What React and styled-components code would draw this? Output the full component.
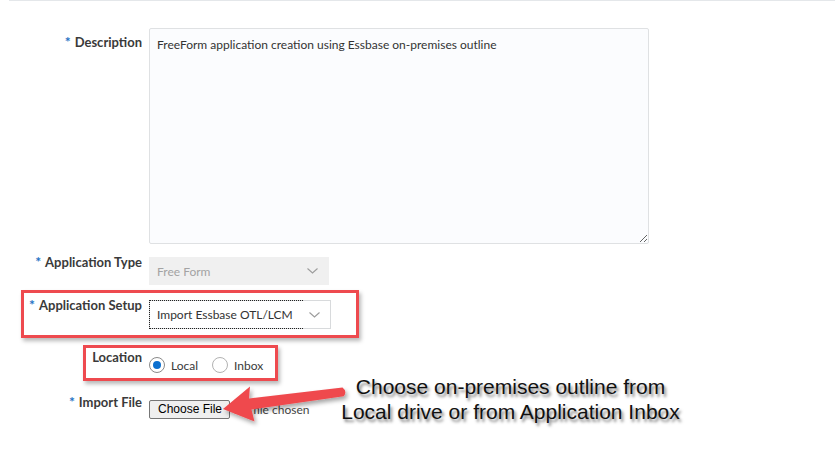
import React from "react";
import styled, { createGlobalStyle } from "styled-components";

const GlobalStyle = createGlobalStyle`
  html, body {
    margin: 0;
    padding: 0;
    background: #ffffff;
  }
  body {
    font-family: Lato, "Open Sans", sans-serif;
    color: #333333;
  }
`;

const Page = styled.div`
  position: relative;
  width: 835px;
  height: 474px;
  overflow: hidden;
`;

const TopRule = styled.div`
  height: 1px;
  margin-left: 9px;
  background: #e4e7ea;
`;

const Form = styled.div`
  display: flex;
  flex-direction: column;
  align-items: flex-start;
  padding-top: 27px;
`;

const Row = styled.div`
  display: grid;
  grid-template-columns: ${(p) => p.$labelWidth || 142}px auto;
  column-gap: 7px;
  align-items: start;
  margin-top: ${(p) => p.$top || 0}px;
`;

const Label = styled.div`
  text-align: right;
  font-size: 13px;
  line-height: 16px;
  font-weight: 700;
  color: #3a3a3a;
  white-space: nowrap;
  margin-top: ${(p) => p.$offset || 0}px;

  > span {
    color: #1f72c4;
    font-size: 14px;
    margin-right: 4px;
  }
`;

const Field = styled.div`
  margin-top: ${(p) => p.$offset || 0}px;
`;

const TextArea = styled.textarea`
  display: block;
  box-sizing: border-box;
  width: 500px;
  height: 216px;
  margin: 0;
  padding: 8px 7px;
  border: 1px solid #dfe1e3;
  border-radius: 2px;
  background: #fbfcfe;
  font-family: Lato, "Open Sans", sans-serif;
  font-size: 12px;
  line-height: 16px;
  color: #333333;
  outline: none;
`;

const Select = styled.div`
  position: relative;
  box-sizing: border-box;
  display: flex;
  align-items: center;
  justify-content: space-between;
  width: ${(p) => p.$width}px;
  height: ${(p) => p.$height || 28}px;
  padding: 0 10px 0 7px;
  border: 1px solid ${(p) => (p.$disabled ? "#f0f0f0" : "#d8dadc")};
  background: ${(p) => (p.$disabled ? "#f0f0f0" : "#ffffff")};
  font-size: 12px;
  color: ${(p) => (p.$disabled ? "#a3a3a3" : "#333333")};

  ${(p) =>
    p.$focused &&
    `
    &::after {
      content: "";
      position: absolute;
      left: -1px;
      top: -1px;
      bottom: -1px;
      width: 153px;
      border: 1px dotted #222;
      border-right: none;
    }
  `}
`;

const Chevron = () => (
  <svg width="11" height="6" viewBox="0 0 11 6" fill="none">
    <polyline points="0.5,0.5 5.5,5 10.5,0.5" stroke="#9c9c9c" strokeWidth="1.1" />
  </svg>
);

const Highlight = styled.div`
  box-sizing: border-box;
  width: ${(p) => p.$width}px;
  margin-left: ${(p) => p.$left}px;
  margin-top: ${(p) => p.$top}px;
  padding: ${(p) => p.$pad};
  border: 3px solid #ee4a4f;
  box-shadow: 2px 3px 4px rgba(0, 0, 0, 0.28);
`;

const RadioGroup = styled.div`
  display: flex;
  align-items: center;
  gap: 14px;
  margin-top: 8px;
`;

const RadioOption = styled.label`
  display: flex;
  align-items: center;
  gap: 6px;
  font-size: 12px;
  color: #3a3a3a;
`;

const RadioDot = styled.span`
  box-sizing: border-box;
  display: flex;
  align-items: center;
  justify-content: center;
  width: 16px;
  height: 16px;
  border-radius: 50%;
  border: 1px solid ${(p) => (p.$checked ? "#8a8a8a" : "#b2b2b2")};
  background: #fff;

  &::after {
    content: "";
    display: ${(p) => (p.$checked ? "block" : "none")};
    width: 8px;
    height: 8px;
    border-radius: 50%;
    background: #0b6fcf;
  }
`;

const FileRow = styled.div`
  display: flex;
  align-items: center;
  gap: 4px;
  margin-top: 6px;
`;

const FileButton = styled.button`
  box-sizing: border-box;
  height: 19px;
  padding: 0 7px 0 8px;
  border: 1px solid #767676;
  border-radius: 2px;
  background: #efefef;
  font-family: "Liberation Sans", Arial, sans-serif;
  font-size: 12px;
  line-height: 15px;
  color: #000;
`;

const FileName = styled.span`
  font-size: 12px;
  color: #444;
`;

const Callout = styled.div`
  position: absolute;
  left: 300px;
  top: 374px;
  width: 421px;
  text-align: center;
  font-family: "Liberation Sans", Arial, sans-serif;
  font-size: 21px;
  line-height: 25px;
  color: #111;
  text-shadow: 2px 3px 3px rgba(0, 0, 0, 0.5);
`;

const ArrowSvg = styled.svg`
  position: absolute;
  left: 215px;
  top: 378px;
  overflow: visible;
`;

const Arrow = () => (
  <ArrowSvg width="140" height="50" viewBox="215 378 140 50">
    <defs>
      <filter id="arrowShadow" x="-20%" y="-40%" width="150%" height="200%">
        <feDropShadow dx="2" dy="3" stdDeviation="2" floodColor="#000" floodOpacity="0.35" />
      </filter>
    </defs>
    <path
      d="M223 409 L250 386.5 L249 398.5 L342.5 387.6 Q347.5 391.5 343.8 396.2 L251.5 409.5 L254.5 421.5 Z"
      fill="#ef4a4e"
      filter="url(#arrowShadow)"
    />
  </ArrowSvg>
);

export default function App() {
  return (
    <Page>
      <GlobalStyle />
      <TopRule />
      <Form>
        <Row>
          <Label $offset={6}>
            <span>*</span>Description
          </Label>
          <TextArea readOnly defaultValue="FreeForm application creation using Essbase on-premises outline" />
        </Row>

        <Row $top={10}>
          <Label>
            <span>*</span>Application Type
          </Label>
          <Field $offset={3}>
            <Select $width={180} $disabled>
              Free Form
              <Chevron />
            </Select>
          </Field>
        </Row>

        <Highlight $left={21} $top={5} $width={338} $pad="4px 0 6px 0">
          <Row $labelWidth={118}>
            <Label>
              <span>*</span>Application Setup
            </Label>
            <Field $offset={3}>
              <Select $width={182} $height={29} $focused>
                Import Essbase OTL/LCM
                <Chevron />
              </Select>
            </Field>
          </Row>
        </Highlight>

        <Highlight $left={83} $top={7} $width={195} $pad="1px 0 5px 0">
          <Row $labelWidth={56}>
            <Label>Location</Label>
            <RadioGroup>
              <RadioOption>
                <RadioDot $checked />
                Local
              </RadioOption>
              <RadioOption>
                <RadioDot />
                Inbox
              </RadioOption>
            </RadioGroup>
          </Row>
        </Highlight>

        <Row $top={13}>
          <Label>
            <span>*</span>Import File
          </Label>
          <FileRow>
            <FileButton>Choose File</FileButton>
            <FileName>No file chosen</FileName>
          </FileRow>
        </Row>
      </Form>

      <Arrow />
      <Callout>
        Choose on-premises outline from
        <br />
        Local drive or from Application Inbox
      </Callout>
    </Page>
  );
}
